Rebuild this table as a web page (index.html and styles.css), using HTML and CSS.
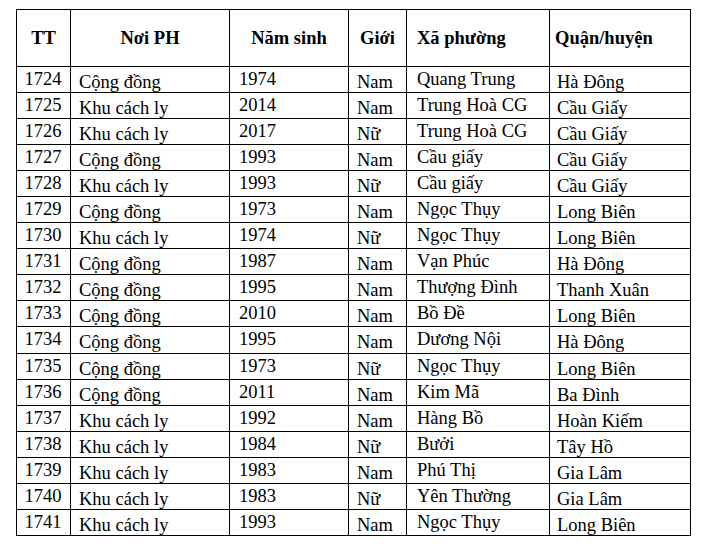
FILE: index.html
```html
<!DOCTYPE html>
<html lang="vi">
<head>
<meta charset="utf-8">
<title>Danh sách ca bệnh</title>
<link rel="stylesheet" href="styles.css">
</head>
<body>
<table class="cases">
  <thead>
    <tr class="head">
      <th class="c-tt">TT</th>
      <th class="c-noi">Nơi PH</th>
      <th class="c-nam">Năm sinh</th>
      <th class="c-gioi">Giới</th>
      <th class="c-xa left">Xã phường</th>
      <th class="c-quan left">Quận/huyện</th>
    </tr>
  </thead>
  <tbody>
    <tr><td class="tt">1724</td><td class="noi">Cộng đồng</td><td class="nam">1974</td><td class="gioi">Nam</td><td class="xa">Quang Trung</td><td class="quan">Hà Đông</td></tr>
    <tr><td class="tt">1725</td><td class="noi">Khu cách ly</td><td class="nam">2014</td><td class="gioi">Nam</td><td class="xa">Trung Hoà CG</td><td class="quan">Cầu Giấy</td></tr>
    <tr><td class="tt">1726</td><td class="noi">Khu cách ly</td><td class="nam">2017</td><td class="gioi">Nữ</td><td class="xa">Trung Hoà CG</td><td class="quan">Cầu Giấy</td></tr>
    <tr><td class="tt">1727</td><td class="noi">Cộng đồng</td><td class="nam">1993</td><td class="gioi">Nam</td><td class="xa">Cầu giấy</td><td class="quan">Cầu Giấy</td></tr>
    <tr><td class="tt">1728</td><td class="noi">Khu cách ly</td><td class="nam">1993</td><td class="gioi">Nữ</td><td class="xa">Cầu giấy</td><td class="quan">Cầu Giấy</td></tr>
    <tr><td class="tt">1729</td><td class="noi">Cộng đồng</td><td class="nam">1973</td><td class="gioi">Nam</td><td class="xa">Ngọc Thụy</td><td class="quan">Long Biên</td></tr>
    <tr><td class="tt">1730</td><td class="noi">Khu cách ly</td><td class="nam">1974</td><td class="gioi">Nữ</td><td class="xa">Ngọc Thụy</td><td class="quan">Long Biên</td></tr>
    <tr><td class="tt">1731</td><td class="noi">Cộng đồng</td><td class="nam">1987</td><td class="gioi">Nam</td><td class="xa">Vạn Phúc</td><td class="quan">Hà Đông</td></tr>
    <tr><td class="tt">1732</td><td class="noi">Cộng đồng</td><td class="nam">1995</td><td class="gioi">Nam</td><td class="xa">Thượng Đình</td><td class="quan">Thanh Xuân</td></tr>
    <tr><td class="tt">1733</td><td class="noi">Cộng đồng</td><td class="nam">2010</td><td class="gioi">Nam</td><td class="xa">Bồ Đề</td><td class="quan">Long Biên</td></tr>
    <tr><td class="tt">1734</td><td class="noi">Cộng đồng</td><td class="nam">1995</td><td class="gioi">Nam</td><td class="xa">Dương Nội</td><td class="quan">Hà Đông</td></tr>
    <tr><td class="tt">1735</td><td class="noi">Cộng đồng</td><td class="nam">1973</td><td class="gioi">Nữ</td><td class="xa">Ngọc Thụy</td><td class="quan">Long Biên</td></tr>
    <tr><td class="tt">1736</td><td class="noi">Cộng đồng</td><td class="nam">2011</td><td class="gioi">Nam</td><td class="xa">Kim Mã</td><td class="quan">Ba Đình</td></tr>
    <tr><td class="tt">1737</td><td class="noi">Khu cách ly</td><td class="nam">1992</td><td class="gioi">Nam</td><td class="xa">Hàng Bồ</td><td class="quan">Hoàn Kiếm</td></tr>
    <tr><td class="tt">1738</td><td class="noi">Khu cách ly</td><td class="nam">1984</td><td class="gioi">Nữ</td><td class="xa">Bưởi</td><td class="quan">Tây Hồ</td></tr>
    <tr><td class="tt">1739</td><td class="noi">Khu cách ly</td><td class="nam">1983</td><td class="gioi">Nam</td><td class="xa">Phú Thị</td><td class="quan">Gia Lâm</td></tr>
    <tr><td class="tt">1740</td><td class="noi">Khu cách ly</td><td class="nam">1983</td><td class="gioi">Nữ</td><td class="xa">Yên Thường</td><td class="quan">Gia Lâm</td></tr>
    <tr><td class="tt">1741</td><td class="noi">Khu cách ly</td><td class="nam">1993</td><td class="gioi">Nam</td><td class="xa">Ngọc Thụy</td><td class="quan">Long Biên</td></tr>
  </tbody>
</table>
</body>
</html>
```

FILE: styles.css
```css
html, body {
  background: #ffffff;
}

body {
  margin: 9px 0 0 16px;
  font-family: "Liberation Serif", "Times New Roman", serif;
  font-size: 18.5px;
  color: #000000;
}

.cases {
  border-collapse: separate;
  border-spacing: 0;
  table-layout: fixed;
  width: 675px;
  border-left: 1px solid #000;
  border-top: 1px solid #000;
}

.cases th,
.cases td {
  box-sizing: border-box;
  border-right: 1px solid #000;
  border-bottom: 1px solid #000;
  line-height: 17px;
  white-space: nowrap;
  overflow: hidden;
}

.head {
  height: 57px;
}

.cases th {
  font-weight: bold;
  text-align: center;
  vertical-align: middle;
  padding: 0;
}

.cases th.left {
  text-align: left;
}

.c-tt { width: 54px; }
.c-noi { width: 159px; }
.c-nam { width: 119px; }
.c-gioi { width: 58px; }
.cases th.c-xa { width: 143px; padding-left: 10px; }
.cases th.c-quan { width: 141px; padding-left: 5px; }

.cases tbody tr {
  height: 26.06px;
}

.cases td {
  vertical-align: top;
  text-align: left;
  padding: 4px 0 0 0;
}

/* columns whose text sits lower in the row */
.cases td.noi,
.cases td.gioi,
.cases td.quan {
  padding-top: 7px;
}

.cases td.tt {
  text-align: center;
  padding-right: 1px;
}

.cases td.noi { padding-left: 8px; }
.cases td.nam { padding-left: 9px; }
.cases td.gioi { padding-left: 8px; }
.cases td.xa { padding-left: 10px; }
.cases td.quan { padding-left: 7px; }
```
